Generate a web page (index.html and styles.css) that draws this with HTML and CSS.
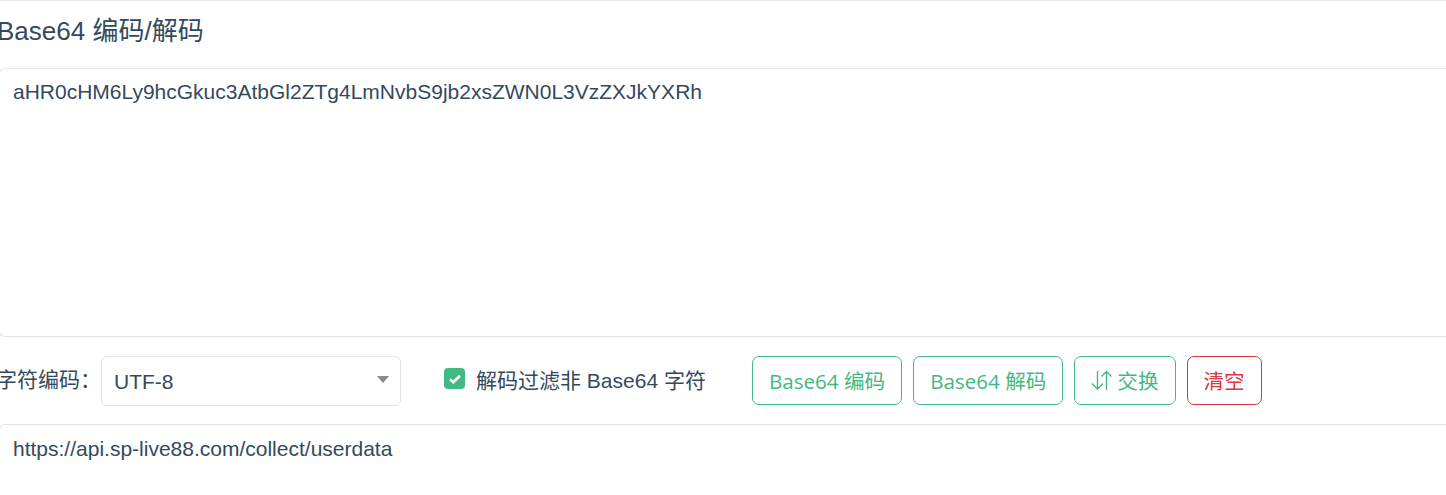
FILE: index.html
```html
<!DOCTYPE html>
<html lang="zh-CN">
<head>
  <meta charset="UTF-8">
  <title>Base64 编码/解码</title>
  <link rel="stylesheet" href="styles.css">
</head>
<body>
  <div class="card">
    <h1 class="card-title">Base64 编码/解码</h1>

    <div class="text-box input-box">aHR0cHM6Ly9hcGkuc3AtbGl2ZTg4LmNvbS9jb2xsZWN0L3VzZXJkYXRh</div>

    <div class="toolbar">
      <span class="charset-label">字符编码：</span>
      <div class="charset-select">
        <span class="charset-value">UTF-8</span>
        <i class="caret"></i>
      </div>

      <label class="filter-check">
        <span class="check-box">
          <svg width="14" height="12" viewBox="0 0 14 12"><path d="M2 6.200 5.300 9.300 12 2.800" fill="none" stroke="#fff" stroke-width="2.600"/></svg>
        </span>
        <span class="filter-text">解码过滤非 Base64 字符</span>
      </label>

      <div class="btn-group">
        <button class="btn btn-green">Base64 编码</button>
        <button class="btn btn-green">Base64 解码</button>
        <button class="btn btn-green">
          <svg class="swap-icon" width="22" height="20" viewBox="0 0 22 20"><path d="M6.500 1V19M1 13.500l5.500 5.500 5.500-5.500M15.500 20V1.500M10.500 6.500l5-5 5 5" fill="none" stroke="#42b983" stroke-width="1.400"/></svg>
          交换
        </button>
        <button class="btn btn-red">清空</button>
      </div>
    </div>

    <div class="text-box output-box">https://api.sp-live88.com/collect/userdata</div>
  </div>
</body>
</html>
```

FILE: styles.css
```css
html, body {
  margin: 0;
  height: 495px;
  overflow: hidden;
  background-color: #fff;
}

body {
  font-family: "Liberation Sans", Arial, "Noto Sans CJK SC", sans-serif;
  color: #34495e;
}

.card {
  margin-left: -1px;
  margin-right: -10px;
  border-top: 1px solid #e9e9ef;
}

.card-title {
  margin: 0;
  margin-left: -2px;
  height: 67px;
  font-size: 26px;
  font-weight: 400;
  line-height: 60px;
}

.text-box {
  box-sizing: border-box;
  border: 1px solid #e2e2ea;
  border-right: none;
  border-bottom: none;
  border-radius: 6px 0 0 0;
  padding: 10px 13px;
  font-size: 21px;
  line-height: 26px;
}

.input-box {
  height: 269px;
  border-bottom: 1px solid #e2e2ea;
  border-radius: 6px 0 0 6px;
}

.output-box {
  height: 71px;
  padding-top: 11px;
}

.toolbar {
  display: flex;
  align-items: center;
  height: 87px;
}

.charset-label {
  flex: none;
  margin-left: -3px;
  padding-bottom: 6px;
  width: 105px;
  font-size: 21px;
  white-space: nowrap;
}

.charset-select {
  box-sizing: border-box;
  display: flex;
  align-items: center;
  justify-content: space-between;
  width: 300px;
  height: 50px;
  padding: 0 11px 0 12px;
  border: 1px solid #e2e2ea;
  border-radius: 6px;
  font-size: 21px;
}

.charset-value {
  padding-top: 2px;
}

.caret {
  margin-top: -3px;
  border-left: 6px solid transparent;
  border-right: 6px solid transparent;
  border-top: 7px solid #8a8a8a;
}

.filter-check {
  display: flex;
  align-items: center;
  gap: 11px;
  margin-left: 43px;
  padding-bottom: 4px;
  font-size: 21px;
  white-space: nowrap;
}

.check-box {
  display: flex;
  align-items: center;
  justify-content: center;
  width: 21px;
  height: 21px;
  border-radius: 4px;
  background-color: #42b983;
}

.btn-group {
  display: flex;
  gap: 11px;
  margin-left: 46px;
}

.btn {
  box-sizing: border-box;
  display: flex;
  align-items: center;
  justify-content: center;
  gap: 4px;
  height: 49px;
  padding: 0 16px 2px;
  border-radius: 7px;
  background-color: transparent;
  font-family: "Open Sans", "Noto Sans CJK SC", sans-serif;
  font-size: 20.600px;
  white-space: nowrap;
}

.btn-green {
  border: 1px solid #42b983;
  color: #42b983;
}

.btn-red {
  border: 1px solid #dc3545;
  color: #dc3545;
}
```
